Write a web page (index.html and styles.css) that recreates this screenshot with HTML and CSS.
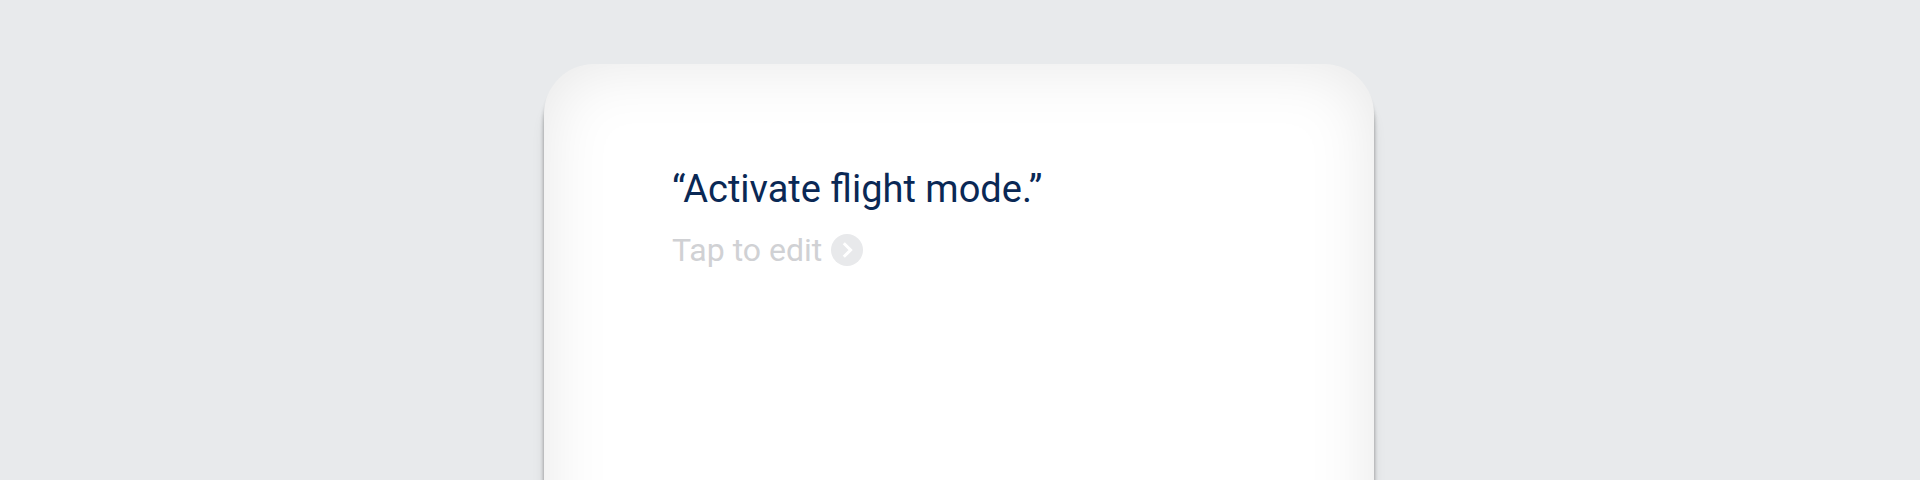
FILE: index.html
```html
<!DOCTYPE html>
<html lang="en"><head><meta charset="utf-8"><title>Assistant</title><link rel="stylesheet" href="styles.css"></head>
<body><div class="screen"><main class="card"><p class="command">“Activate flight mode.”</p><div class="edit"><span>Tap to edit</span><svg class="arrow" viewBox="0 0 32 32"><circle cx="16" cy="16" r="16" fill="#e8e9eb"/><path d="M12.8 9.2l6.8 6.8-6.8 6.8" fill="none" stroke="#fff" stroke-width="3"/></svg></div></main></div></body></html>
```
FILE: styles.css
```css
body{margin:0;background:#e8eaec;font-family:Roboto,sans-serif}
.screen{height:480px;overflow:hidden;display:flex;justify-content:center}
.card{box-sizing:border-box;flex:none;width:830px;height:600px;margin:64px 2px 0 0;padding:98px 128px;border-radius:50px;background:#fff;box-shadow:0 10px 4px rgba(0,0,0,.38),0 22px 18px -6px rgba(0,0,0,.16),inset 0 0 68px rgba(0,0,0,.1)}
.command{margin:0;font-size:38px;line-height:54px;color:#0a2855}
.edit{display:flex;align-items:center;gap:9px;margin-top:14px;font-size:32px;line-height:40px;color:#d0d1d4}
.arrow{width:32px;height:32px}
```
